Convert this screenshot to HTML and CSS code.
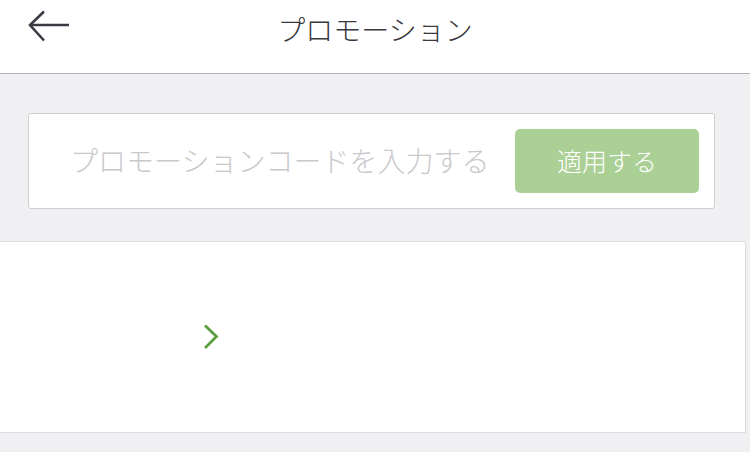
FILE: index.html
```html
<!DOCTYPE html>
<html lang="ja">
<head>
<meta charset="utf-8">
<title>プロモーション</title>
<link rel="stylesheet" href="styles.css">
</head>
<body>
<header class="topbar">
  <button class="back" aria-label="戻る">
    <svg width="44" height="36" viewBox="0 0 44 36">
      <path d="M42 15H3" stroke="#3a3a44" stroke-width="2.6" fill="none"/>
      <path d="M17 1.5L3 15l14 15.5" stroke="#3a3a44" stroke-width="2.6" fill="none" stroke-linejoin="miter"/>
    </svg>
  </button>
  <h1 class="title">プロモーション</h1>
</header>
<main class="content">
  <form class="promo">
    <input class="promo-input" type="text" placeholder="プロモーションコードを入力する">
    <button class="apply" type="button">適用する</button>
  </form>
  <section class="list">
    <div class="row">
      <svg class="chev" width="16" height="26" viewBox="0 0 16 26">
        <path d="M2 1.5L13.5 12.5 2 24" stroke="#5a9e3e" stroke-width="2.8" fill="none"/>
      </svg>
    </div>
  </section>
</main>
</body>
</html>
```
FILE: styles.css
```css
html, body {
  margin: 0;
  padding: 0;
}
body {
  width: 750px;
  height: 452px;
  overflow: hidden;
  background: #f0f0f2;
  font-family: "Noto Sans CJK JP", "Noto Sans", sans-serif;
  font-weight: 300;
}
.topbar {
  position: relative;
  height: 73px;
  background: #ffffff;
  border-bottom: 1px solid #b4b4b8;
  display: flex;
  justify-content: center;
}
.back {
  position: absolute;
  left: 27px;
  top: 10px;
  padding: 0;
  border: 0;
  background: none;
  width: 44px;
  height: 36px;
}
.back svg {
  display: block;
}
.title {
  margin: 0;
  padding-top: 10px;
  font-size: 28px;
  line-height: 38px;
  font-weight: 300;
  color: #38383e;
}
.content {
  padding-top: 39px;
}
.promo {
  margin: 0 0 0 28px;
  height: 94px;
  background: #fff;
  border: 1px solid #cfcfd3;
  border-radius: 3px;
  display: flex;
  align-items: center;
  padding: 0 15px 0 41px;
  box-sizing: content-box;
  width: 629px;
}
.promo-input {
  flex: 1;
  min-width: 0;
  border: 0;
  outline: none;
  background: transparent;
  padding: 0 0 3px 0;
  font-family: inherit;
  font-weight: 300;
  font-size: 28px;
  color: #333;
}
.promo-input::placeholder {
  color: #c9c9cd;
}
.apply {
  width: 184px;
  height: 64px;
  border: 0;
  border-radius: 5px;
  background: #abd096;
  color: #ffffff;
  font-family: inherit;
  font-weight: 300;
  font-size: 25px;
  padding: 0 0 3px 0;
}
.list {
  margin: 32px 0 0 -1px;
  width: 745px;
  background: #fff;
  border: 1px solid #dcdce0;
}
.row {
  height: 190px;
  display: flex;
  align-items: center;
  padding-left: 203px;
}
.chev {
  display: block;
  margin-top: 0;
}
```
